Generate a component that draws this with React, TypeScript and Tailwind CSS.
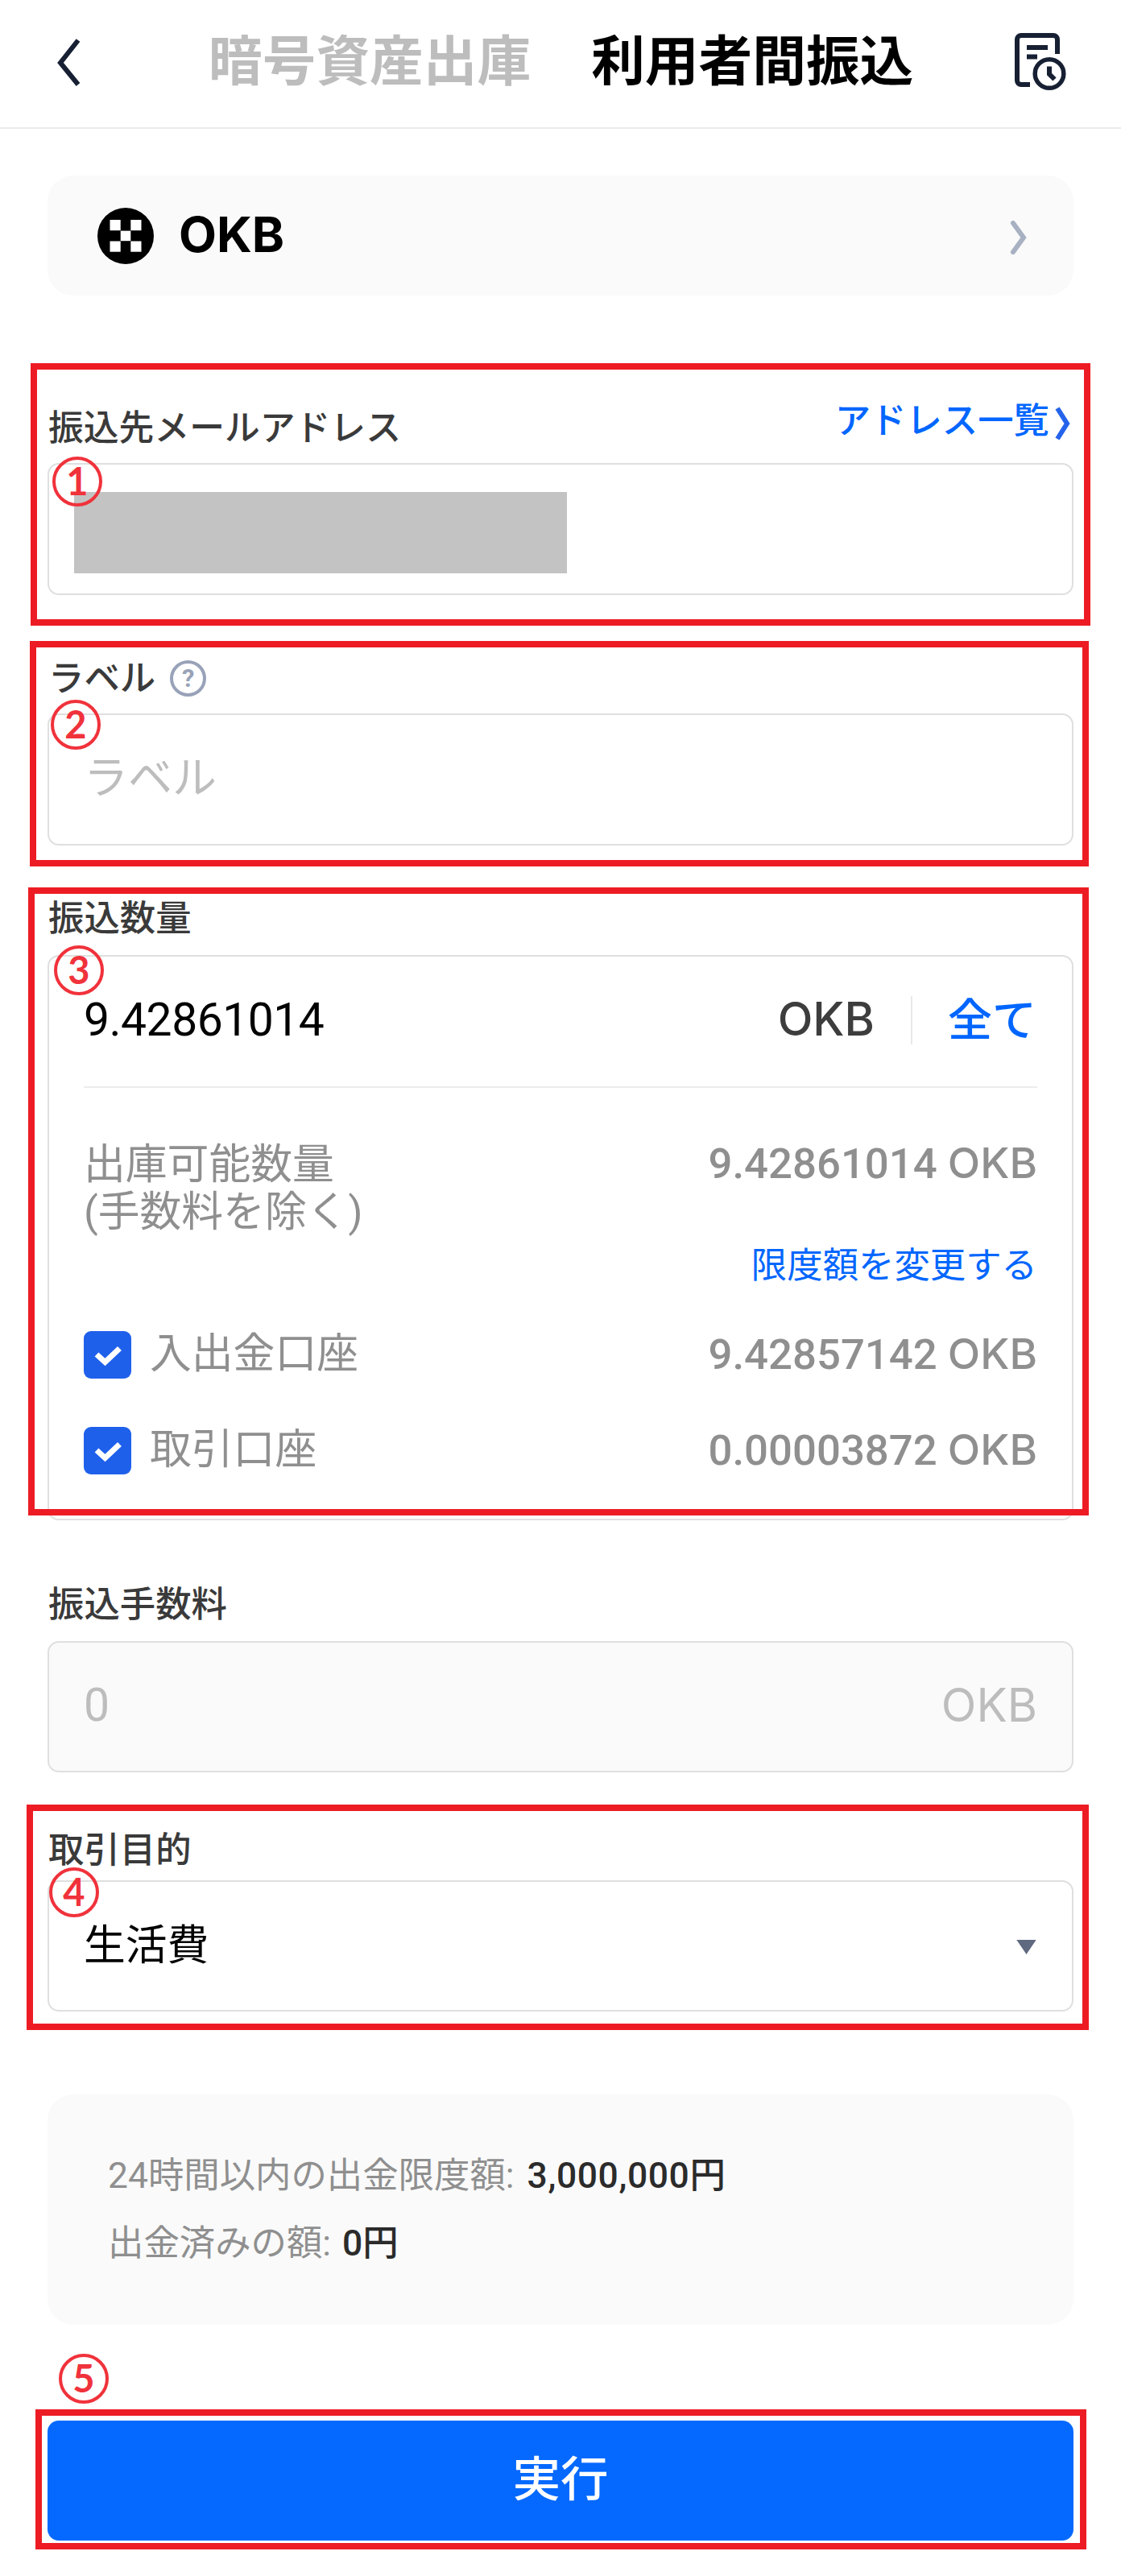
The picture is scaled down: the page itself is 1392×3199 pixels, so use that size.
import React from "react";

type WithClass = { className?: string; children?: React.ReactNode };

const accounts = [
  { name: "入出金口座", amount: "9.42857142" },
  { name: "取引口座", amount: "0.00003872" },
];

// Latin ticker, slightly wider than the digits next to it
const Ticker = ({ className = "" }: WithClass) => (
  <span className={`font-['Inter','Roboto',sans-serif] ${className}`}>OKB</span>
);

const Label = ({ children, className = "" }: WithClass) => (
  <div
    className={`flex h-[44px] items-center pl-px text-[44.4px] leading-[44px] font-medium text-[#3a3a3a] ${className}`}
  >
    {children}
  </div>
);

const Field = ({ children, className = "" }: WithClass) => (
  <div
    className={`flex items-center justify-between rounded-[14px] border-2 border-[#dfdfdf] px-[43px] ${className}`}
  >
    {children}
  </div>
);

const Highlight = ({ className = "" }: WithClass) => (
  <div className={`pointer-events-none absolute border-8 border-[#ed1c24] ${className}`} />
);

const Step = ({ children, className = "" }: WithClass) => (
  <div
    className={`absolute flex size-[62px] items-center justify-center rounded-full border-[4px] border-[#f0323b] font-['Lato',sans-serif] text-[47px] leading-none font-bold text-[#f0323b] ${className}`}
  >
    <span className="-mt-px">{children}</span>
  </div>
);

const Checkbox = () => (
  <svg className="size-[59px] shrink-0" viewBox="0 0 59 59" fill="none">
    <rect width="59" height="59" rx="9" fill="#1f60eb" />
    <path d="M16 29l10.5 9.5 18-17" stroke="#fff" strokeWidth="7" />
  </svg>
);

const OkbLogo = () => (
  <svg className="size-[70px]" viewBox="0 0 70 70">
    <circle cx="35" cy="35" r="35" fill="#000" />
    <g fill="#fff">
      <rect x="15.5" y="15" width="13.2" height="13.2" />
      <rect x="41.3" y="15" width="13.2" height="13.2" />
      <rect x="28.7" y="28.6" width="12.6" height="12.6" />
      <rect x="15.5" y="41.5" width="13.2" height="13.2" />
      <rect x="41.3" y="41.5" width="13.2" height="13.2" />
    </g>
  </svg>
);

const HistoryIcon = () => (
  <svg className="h-[72px] w-[64px]" viewBox="0 0 64 72" fill="none" stroke="#172033" strokeWidth="6">
    <path d="M53 26V8a5 5 0 0 0-5-5H8a5 5 0 0 0-5 5v51a5 5 0 0 0 5 5h11" />
    <path d="M15 18h26M15 29.500h13" />
    <circle cx="43" cy="50.500" r="17.800" strokeWidth="5.500" />
    <path d="M43 41.500v9.500l6.500 6.500" />
  </svg>
);

const Header = () => (
  <header className="flex h-[160px] items-center border-b-2 border-[#ebebeb] pb-1 pl-[68px] pr-[68px] text-[66.700px] leading-[80px] font-bold">
    <svg className="h-[60px] w-[34px]" viewBox="0 0 34 60" fill="none">
      <path d="M29 3L7 31l22 27" stroke="#172033" strokeWidth="6" />
    </svg>
    <span className="ml-[157px] text-[#bdbdbd]">暗号資産出庫</span>
    <span className="ml-[75px] text-black">利用者間振込</span>
    <div className="ml-auto">
      <HistoryIcon />
    </div>
  </header>
);

export default function App() {
  return (
    <div className="relative h-[3199px] w-full overflow-hidden bg-white font-['Roboto','Noto_Sans_CJK_JP',sans-serif]">
      <Header />

      <main className="flex flex-col px-[59px]">
        {/* Coin picker */}
        <div className="mt-[58px] flex h-[149px] items-center rounded-[32px] bg-[#fafafa] px-[62px]">
          <OkbLogo />
          <Ticker className="-mt-[2px] ml-[31px] text-[61px] leading-none font-bold text-black" />
          <svg className="ml-auto -mr-[5px] mt-[4px] h-[42px] w-[22px]" viewBox="0 0 22 42" fill="none">
            <path d="M4 3l13 18L4 39" stroke="#a7b1c2" strokeWidth="6" strokeLinecap="round" />
          </svg>
        </div>

        {/* Recipient address */}
        <Label className="mt-[143px] justify-between">
          <span className="text-[43.8px]">振込先メールアドレス</span>
          <a className="-mt-[18px] flex items-center text-[#0066ff]">
            アドレス一覧
            <svg className="ml-[6px] mt-[6px] mr-[2px] h-[42px] w-[22px]" viewBox="0 0 22 42" fill="none">
              <path d="M4 2l12 19L4 40" stroke="#2563eb" strokeWidth="6" />
            </svg>
          </a>
        </Label>
        <Field className="mt-[21px] h-[164px] pl-[31px]">
          <div className="mt-[9px] h-[101px] w-[612px] bg-[#c3c3c3]" />
        </Field>

        {/* Label */}
        <Label className="mt-[82px]">
          <span>ラベル</span>
          <span className="-mt-[2px] ml-[18px] flex size-[45px] items-center justify-center rounded-full border-4 border-[#98a2b8] text-[31px] leading-none font-bold text-[#98a2b8]">
            ?
          </span>
        </Label>
        <Field className="mt-[21px] h-[164px] pb-1 text-[55px] text-[#bdbdbd]">ラベル</Field>

        {/* Amount */}
        <Label className="mt-[69px]">振込数量</Label>
        <section className="mt-[23px] h-[702px] rounded-[14px] border-2 border-[#dfdfdf] px-[43px]">
          <div className="flex h-[163px] items-center border-b-2 border-[#ececec] pb-[3px] leading-[60px]">
            <span className="text-[57px] tracking-[-0.5px] text-black">9.42861014</span>
            <Ticker className="-mt-[2px] ml-auto text-[57px] font-medium text-[#3d3d3d]" />
            <span className="ml-[45px] h-[60px] w-[2px] bg-[#e8e8e8]" />
            <span className="mr-px ml-[44px] text-[55px] font-medium text-[#0066ff]">全て</span>
          </div>
          <div className="mt-[66px] flex items-start justify-between text-[51.8px] leading-[59px] text-[#8f8f8f]">
            <p>
              出庫可能数量
              <br />
              (手数料を除く)
            </p>
            <span className="text-[52.7px] leading-[54px] font-medium">
              9.42861014 <Ticker />
            </span>
          </div>
          <a className="mt-[15px] block text-right text-[44.4px] leading-[44px] text-[#0066ff]">
            限度額を変更する
          </a>
          <div className="mt-[58px] flex flex-col gap-[59px]">
            {accounts.map((a) => (
              <div key={a.name} className="flex h-[60px] items-center text-[#8f8f8f]">
                <Checkbox />
                <span className="ml-[23px] text-[51.8px] leading-[60px]">{a.name}</span>
                <span className="-mt-[2px] ml-auto text-[52.7px] leading-[60px] font-medium">
                  {a.amount} <Ticker />
                </span>
              </div>
            ))}
          </div>
        </section>

        {/* Fee */}
        <Label className="mt-[83px]">振込手数料</Label>
        <Field className="mt-[23px] h-[163px] bg-[#fafafa] pb-1 text-[57px] text-[#bdbdbd]">
          <span>0</span>
          <Ticker />
        </Field>

        {/* Purpose */}
        <Label className="mt-[75px]">取引目的</Label>
        <Field className="mt-[15px] h-[163px] text-[51.8px] text-black">
          <span>生活費</span>
          <svg className="mt-[2px] mr-px h-[18px] w-[25px]" viewBox="0 0 23 17">
            <path d="M0 0h23L11.500 17z" fill="#5f6980" />
          </svg>
        </Field>

        {/* Limits */}
        <div className="mt-[103px] h-[286px] rounded-[32px] bg-[#fafafa] px-[75px] pt-[59px] text-[44.4px] leading-[84px] text-[#8f8f8f]">
          <p>
            24時間以内の出金限度額:{" "}
            <b className="ml-[5px] font-medium tracking-[0.6px] text-[#2b2b2b]">3,000,000円</b>
          </p>
          <p>
            出金済みの額: <b className="ml-[3px] font-medium text-[#2b2b2b]">0円</b>
          </p>
        </div>

        <button className="mt-[119px] h-[149px] rounded-[14px] bg-[#0569ff] text-[59.500px] leading-none font-medium text-white">
          実行
        </button>
      </main>

      {/* Guide overlay */}
      <Highlight className="left-[38px] top-[451px] h-[326px] w-[1316px]" />
      <Highlight className="left-[37px] top-[796px] h-[280px] w-[1315px]" />
      <Highlight className="left-[35px] top-[1102px] h-[780px] w-[1317px]" />
      <Highlight className="left-[33px] top-[2241px] h-[280px] w-[1319px]" />
      <Highlight className="left-[44px] top-[2992px] h-[174px] w-[1305px]" />
      <Step className="left-[65px] top-[567px]">1</Step>
      <Step className="left-[63px] top-[869px]">2</Step>
      <Step className="left-[67px] top-[1174px]">3</Step>
      <Step className="left-[61px] top-[2319px]">4</Step>
      <Step className="left-[73px] top-[2923px]">5</Step>
    </div>
  );
}
